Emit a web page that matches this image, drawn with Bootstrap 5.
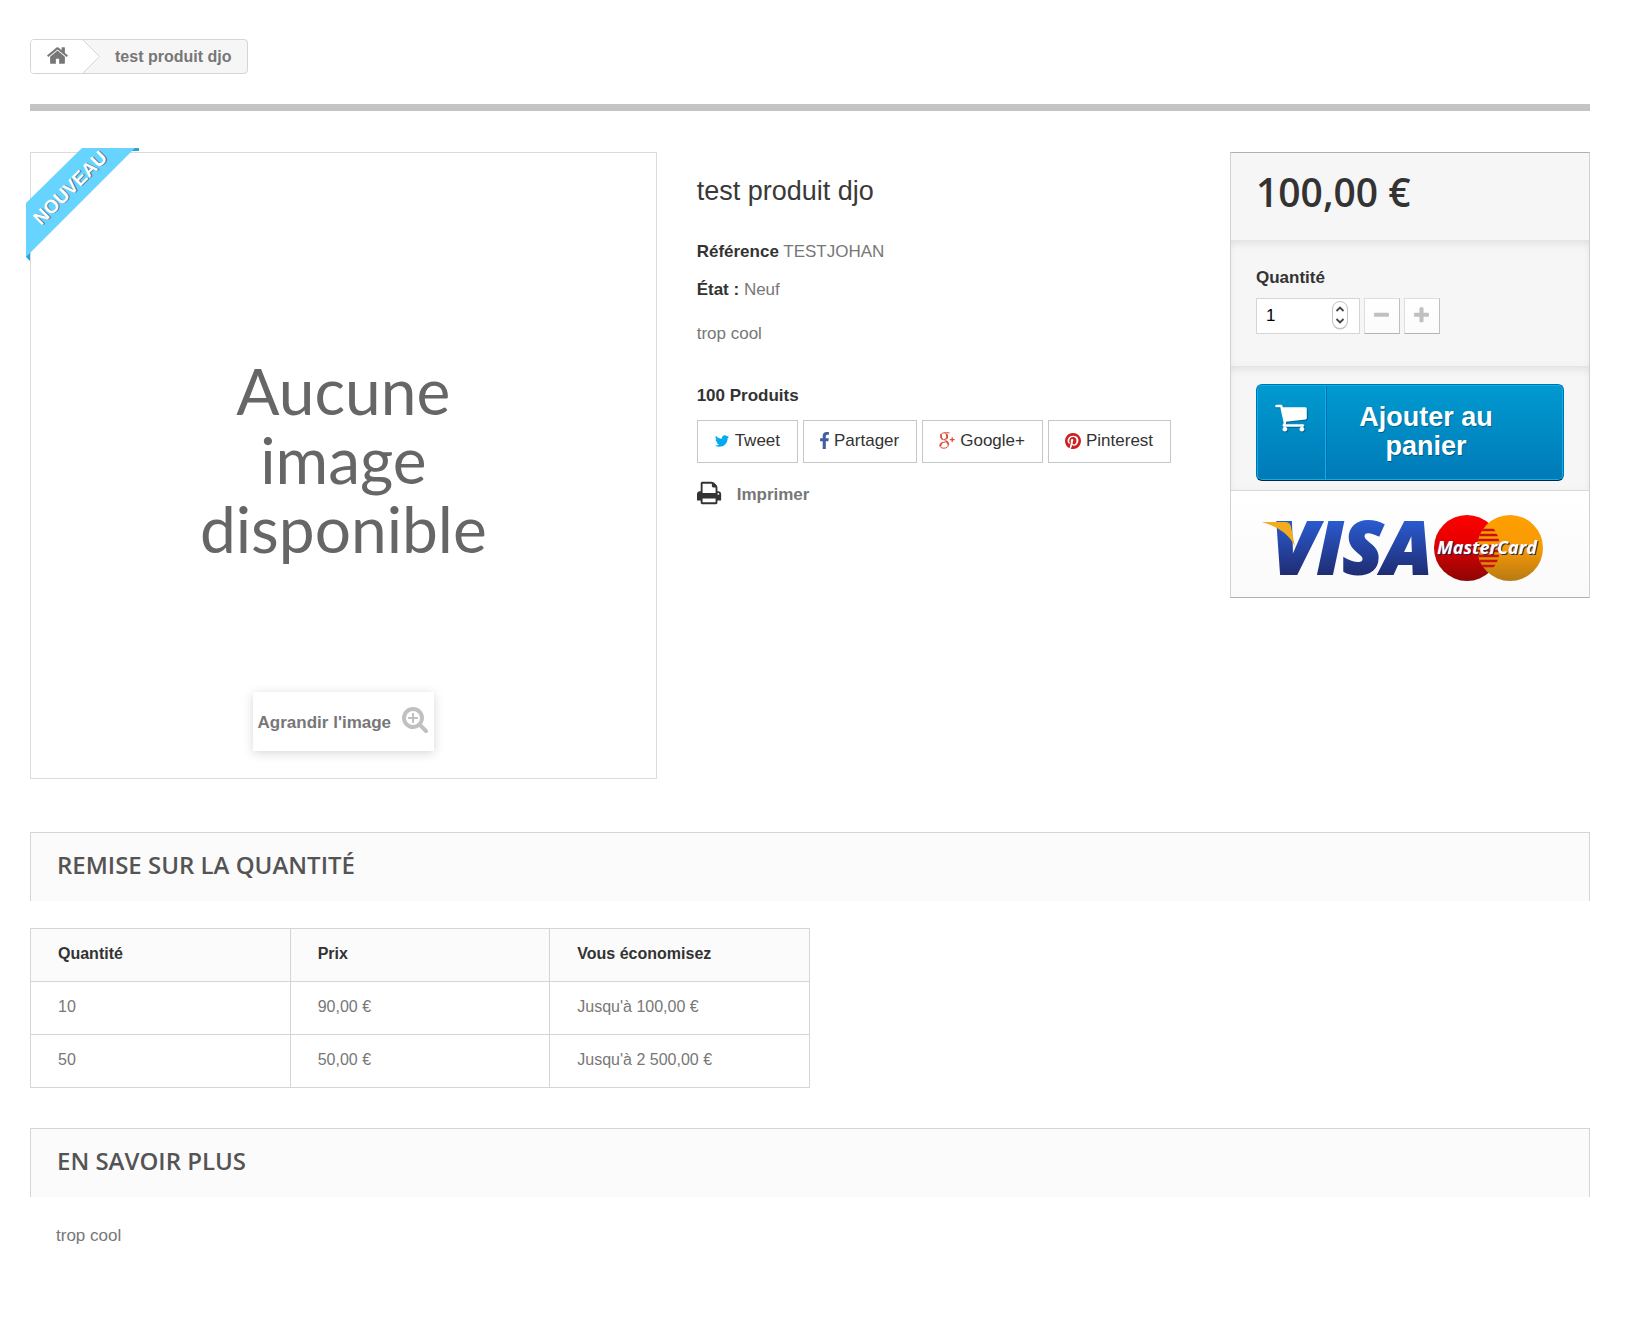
<!DOCTYPE html>
<html lang="fr">
<head>
<meta charset="utf-8">
<meta name="viewport" content="width=device-width, initial-scale=1">
<title>test produit djo</title>
<link href="https://cdn.jsdelivr.net/npm/bootstrap@5.3.0/dist/css/bootstrap.min.css" rel="stylesheet">
<style>
  body { font-family: "Liberation Sans", Arial, sans-serif; font-size: 17px; line-height: 24px; color: #777; background: #fff; }
  .page-wrap { padding: 39px 60px 60px 30px; }
  a { color: #777; text-decoration: none; }
  a:hover { color: #333; }
  .ink { color: #333; }
  .icon { display: block; fill: currentColor; flex: none; }

  /* breadcrumb */
  .crumbs { height: 35px; border: 1px solid #d6d4d4; border-radius: 4px; background: #f6f6f6; font-size: 16px; overflow: hidden; }
  .crumb-home { background: #fff; width: 49px; padding: 0 0 2px 15px; }
  .crumb-tip { width: 20px; height: 33px; display: block; flex: none; }
  .crumb-here { padding: 0 16px 0 15px; }

  .rule { height: 7px; margin: 30px 0 41px; border: 0; background: #c4c4c4; opacity: 1; }
  .product { --bs-gutter-x: 40px; }

  /* picture */
  .shot { border: 1px solid #dbdbdb; aspect-ratio: 1; padding-bottom: 12px; }
  .shot-text { font: 400 64px/69px Lato, "Open Sans", sans-serif; color: #666; }
  .ribbon { left: -5px; top: -5px; }
  .ribbon text { font: bold 19px "Liberation Sans", Arial, sans-serif; }
  .enlarge { bottom: 27px; height: 59px; padding: 4px 5px 0 5px; gap: 10px; border: 0; background: #fff; color: #777; box-shadow: 0 2px 10px rgba(0,0,0,.16); }
  .enlarge .icon { color: #c0c0c0; margin-bottom: 8px; }

  /* details */
  .details { padding-top: 24px; }
  .details h1 { font-size: 27px; line-height: 30px; margin-bottom: 34px; color: #3a3939; font-weight: 400; }
  .details p { margin: 0; }
  .details .state { margin-top: 14px; }
  .details .summary { margin-top: 20px; }
  .details .stock { margin: 38px 0 12px; }
  .share-row { gap: 5px; }
  .share-btn { height: 43px; padding: 0 17px 2px 16px; border: 1px solid #c7c7c7; border-radius: 0; background: #fff; color: #333; font-size: 17px; gap: 5px; white-space: nowrap; }
  .share-btn:hover { background: #f6f6f6; }
  .print-link { gap: 14px; margin-top: 17px; }
  .print-link .icon { margin-bottom: 4px; }

  /* buy box */
  .buy { border: 1px solid #d2d0d0; border-top-color: #b0b0b0; border-bottom-color: #b0b0b0; background: #f6f6f6; }
  .buy-part { padding: 0 25px; }
  .shaded { box-shadow: inset 0 7px 9px -3px rgba(0,0,0,.07), inset 0 0 9px rgba(0,0,0,.03); }
  .price { font: 600 39px/39px "Open Sans", sans-serif; padding: 19px 25px 29px; color: #333; }
  .qty { padding-top: 26px; padding-bottom: 32px; }
  .qty-row { gap: 4px; margin-top: 8px; }
  .qty-field { width: 104px; height: 36px; padding: 0 30px 0 9px; border: 1px solid #d6d4d4; border-radius: 0; font-size: 17px; color: #000; appearance: textfield; -moz-appearance: textfield; }
  .qty-field::-webkit-inner-spin-button { appearance: none; -webkit-appearance: none; }
  .stepper { right: 11px; top: 2px; }
  .qty-btn { width: 36px; height: 36px; padding: 0 0 2px; border: 1px solid; border-color: #dedcdc #c1bfbf #b5b4b4 #dedcdc; background: linear-gradient(#fff, #fbfbfb); color: #c0c0c0; }
  .add { padding-top: 18px; padding-bottom: 9px; }
  .add-btn { height: 97px; padding: 0; border: 1px solid #0079b6; border-color: #006fb7 #006fb7 #012740; border-radius: 6px; color: #fff; font-weight: bold; font-size: 27px; line-height: 29px;
    background: linear-gradient(#009ad0, #007ab7); box-shadow: inset 0 0 0 1px #06b2e6; text-shadow: 1px 1px rgba(0,0,0,.3); overflow: hidden; }
  .add-cart { width: 69px; padding-top: 15px; padding-left: 17px; border-right: 1px solid #06b2e6; }
  .add-cart .icon { filter: drop-shadow(1px 1px rgba(0,0,0,.3)); }
  .add-text { border-left: 1px solid #006fb7; padding: 0 44px 2px 6px; margin: 1px 0; }
  .cards { border-top: 1px solid #dad8d8; background: linear-gradient(#fff, #fafafa); padding: 9px 0 17px 25px; }
  .visa { font: italic 800 73px "Open Sans", sans-serif; stroke-width: 2px; }
  .master { font: italic 700 18px "Open Sans", sans-serif; }

  /* lower sections */
  .lower { margin-top: 53px; }
  .block-title { border: 1px solid #d6d4d4; border-bottom: 0; background: #fbfbfb; color: #555454; font: 600 24px/33px "Open Sans", sans-serif; padding: 15px 26px 20px; margin: 0; text-transform: uppercase; }
  .discounts { font-size: 16px; border-color: #d6d4d4; margin: 27px 0 40px; table-layout: fixed; line-height: 22px; }
  .discounts > :not(caption) > * > * { padding: 14px 27px 16px; color: #777; background: none; }
  .discounts > thead > tr > th { background: #fbfbfb; color: #333; }
  .more-text { margin: 0; padding: 27px 26px 0; }
</style>
<script src="https://cdn.jsdelivr.net/npm/bootstrap@5.3.0/dist/js/bootstrap.bundle.min.js"></script>
</head>
<body>
<div class="container-fluid page-wrap">

  <nav aria-label="Fil d'Ariane" class="d-flex">
    <div class="crumbs d-inline-flex align-items-stretch">
      <a href="#" class="crumb-home d-flex align-items-center" aria-label="Accueil">
        <svg class="icon" width="23" height="23" viewBox="0 0 1792 1792"><path d="M1472 992v480q0 26-19 45t-45 19h-384v-384h-256v384h-384q-26 0-45-19t-19-45v-480q0-1 .5-3t.5-3l575-474 575 474q1 2 1 6zm223-69l-62 74q-8 9-21 11h-3q-13 0-21-7l-692-577-692 577q-12 8-24 7-13-2-21-11l-62-74q-8-10-7-23.5t11-21.5l719-599q32-26 76-26t76 26l244 204v-195q0-14 9-23t23-9h192q14 0 23 9t9 23v408l219 182q10 8 11 21.5t-7 23.5z"/></svg>
      </a>
      <svg class="crumb-tip" viewBox="0 0 20 33"><path d="M0 0H3L19.500 16.500 3 33H0z" fill="#fff"/><path d="M3 0L19.500 16.500 3 33" fill="none" stroke="#d6d4d4"/></svg>
      <span class="crumb-here fw-bold d-flex align-items-center">test produit djo</span>
    </div>
  </nav>

  <hr class="rule">

  <div class="row product">
    <div class="col-5">
      <div class="shot position-relative d-flex align-items-center justify-content-center">
        <div class="shot-text text-center">Aucune<br>image<br>disponible</div>
        <svg class="ribbon position-absolute" width="113" height="113" viewBox="0 0 113 113">
          <path d="M104 0h9v3h-9zM0 104v5l4 4v-9z" fill="#2aa3d8"/>
          <path d="M56 0h53L0 109V55z" fill="#67d3ff"/>
          <g transform="translate(15 78) rotate(-45)"><text x="1" y="1" fill="#4a7a90">NOUVEAU</text><text x="0" y="0" fill="#fff">NOUVEAU</text></g>
        </svg>
        <button type="button" class="enlarge position-absolute d-flex align-items-center fw-bold text-nowrap">Agrandir l'image
          <svg class="icon" width="28" height="28" viewBox="0 0 1792 1792"><path d="M1088 800v64q0 13-9.500 22.500t-22.500 9.500h-224v224q0 13-9.500 22.500t-22.500 9.500h-64q-13 0-22.500-9.500t-9.500-22.500v-224h-224q-13 0-22.500-9.500t-9.500-22.500v-64q0-13 9.500-22.500t22.500-9.500h224v-224q0-13 9.500-22.500t22.500-9.500h64q13 0 22.500 9.500t9.500 22.500v224h224q13 0 22.500 9.500t9.500 22.500zm128 32q0-185-131.500-316.500t-316.500-131.500-316.500 131.500-131.500 316.500 131.500 316.500 316.500 131.500 316.500-131.500 131.500-316.500zm512 832q0 53-37.500 90.500t-90.500 37.500q-54 0-90-38l-343-342q-179 124-399 124-143 0-273.500-55.500t-225-150-150-225-55.500-273.500 55.500-273.500 150-225 225-150 273.500-55.500 273.500 55.500 225 150 150 225 55.500 273.500q0 220-124 399l343 343q37 37 37 90z"/></svg>
        </button>
      </div>
    </div>

    <div class="col-4">
      <div class="details">
        <h1>test produit djo</h1>
        <p><strong class="ink">Référence</strong> TESTJOHAN</p>
        <p class="state"><strong class="ink">État :</strong> Neuf</p>
        <p class="summary">trop cool</p>
        <p class="stock ink fw-bold">100 Produits</p>
        <div class="share-row d-flex">
          <button type="button" class="share-btn d-flex align-items-center">
            <svg class="icon" width="16" height="16" viewBox="0 0 1792 1792" color="#00aaf0"><path d="M1684 408q-67 98-162 167 1 14 1 42 0 130-38 259.500t-115.500 248.500-184.500 210.500-258 146-323 54.500q-271 0-496-145 35 4 78 4 225 0 401-138-105-2-188-64.500t-114-159.500q33 5 61 5 43 0 85-11-112-23-185.500-111.500t-73.500-205.500v-4q68 38 146 41-66-44-105-115t-39-154q0-88 44-163 121 149 294.500 238.500t371.500 99.500q-8-38-8-74 0-134 94.500-228.500t228.500-94.500q140 0 236 102 109-21 205-78-37 115-142 178 93-10 186-50z"/></svg>Tweet</button>
          <button type="button" class="share-btn d-flex align-items-center">
            <svg class="icon" width="9" height="17" viewBox="479 0 864 1664" color="#435f9f"><path d="M1343 12v264h-157q-86 0-116 36t-30 108v189h293l-39 296h-254v759h-306v-759h-255v-296h255v-218q0-186 104-288.500t277-102.500q147 0 228 12z"/></svg>Partager</button>
          <button type="button" class="share-btn d-flex align-items-center">
            <svg width="16" height="17" viewBox="0 0 16 17" fill="none" stroke="#e04b34"><path d="M10.500 .8H5.500M6 7.700C5 9.200 9.300 9.600 9.300 12.800 9.300 15 7.500 16.200 4.800 16.200S.9 15 .9 13.200 2.800 10.300 6.500 10.200" stroke-width="1"/><path d="M7 8.800C8 10 9.400 10.600 9.400 12.800M2.300 2.200C1.600 3.500 2 6.500 3.500 7.300M7.400 1.800C8.300 3.500 8.200 6 7.200 7M1.400 14.200C1.300 12.500 2 11.500 3.200 10.900" stroke-width="1.700"/><path d="M5.500 .8C3 .8 1.800 2.300 1.800 4.300S3 7.700 4.800 7.700 8 6.300 8 4.300 7 .9 5.500 .9" stroke-width="1"/><path d="M10.800 7.600H15.600M13.200 5.200V10" stroke-width="1.300"/></svg>Google+</button>
          <button type="button" class="share-btn d-flex align-items-center">
            <svg class="icon" width="16" height="16" viewBox="128 128 1536 1536" color="#ce1f21"><path d="M1664 896q0 209-103 385.500t-279.500 279.500-385.500 103q-111 0-218-32 59-93 78-164 9-34 54-211 20 39 73 67.500t114 28.500q121 0 216-68.500t147-188.500 52-270q0-114-59.500-214t-172.500-163-255-63q-105 0-196 29t-154.500 77-109 110.500-67 129.500-21.500 134q0 104 40 183t117 111q30 12 38-20 2-7 8-31t8-30q6-23-11-43-51-61-51-151 0-151 104.500-259.500t273.500-108.500q151 0 235.500 82t84.500 213q0 170-68.500 289t-175.500 119q-61 0-98-43.500t-23-104.500q8-35 26.500-93.500t30-103 11.500-75.500q0-50-27-83t-77-33q-62 0-105 57t-43 142q0 73 25 122l-99 418q-17 70-13 177-206-91-333-281t-127-423q0-209 103-385.500t279.500-279.500 385.500-103 385.500 103 279.500 279.500 103 385.500z"/></svg>Pinterest</button>
        </div>
        <a href="#" class="print-link d-inline-flex align-items-center fw-bold">
          <svg class="icon ink" width="26" height="26" viewBox="64 0 1792 1792"><path d="M448 1536h896v-256h-896v256zm0-640h896v-384h-160q-40 0-68-28t-28-68v-160h-640v640zm1152 64q0-26-19-45t-45-19-45 19-19 45 19 45 45 19 45-19 19-45zm128 0v416q0 13-9.500 22.500t-22.500 9.500h-224v160q0 40-28 68t-68 28h-960q-40 0-68-28t-28-68v-160h-224q-13 0-22.500-9.500t-9.500-22.500v-416q0-79 56.500-135.500t135.500-56.500h64v-544q0-40 28-68t68-28h672q40 0 88 20t76 48l152 152q28 28 48 76t20 88v256h64q79 0 135.500 56.500t56.500 135.500z"/></svg>Imprimer</a>
      </div>
    </div>

    <div class="col-3">
      <form class="buy">
        <div class="price">100,00 €</div>
        <div class="buy-part shaded qty">
          <label for="qty" class="d-block fw-bold ink">Quantité</label>
          <div class="qty-row d-flex">
            <div class="position-relative">
              <input id="qty" class="qty-field d-block" type="number" value="1" min="1">
              <svg class="stepper position-absolute" width="18" height="31" viewBox="0 0 18 31"><rect x="1.500" y="2" width="15" height="27.500" rx="7.500" fill="#bbb"/><rect x="1.500" y="1.500" width="15" height="27" rx="7.500" fill="#fff" stroke="#c4c4c4"/><path d="M5.500 11l3.500-3.500 3.500 3.500M5.500 19l3.500 3.500 3.500-3.500" fill="none" stroke="#444" stroke-width="1.800"/></svg>
            </div>
            <button type="button" class="qty-btn d-flex align-items-center justify-content-center" aria-label="Moins"><svg class="icon" width="19" height="19" viewBox="0 0 1792 1792"><path d="M1600 736v192q0 40-28 68t-68 28h-1216q-40 0-68-28t-28-68v-192q0-40 28-68t68-28h1216q40 0 68 28t28 68z"/></svg></button>
            <button type="button" class="qty-btn d-flex align-items-center justify-content-center" aria-label="Plus"><svg class="icon" width="19" height="19" viewBox="0 0 1792 1792"><path d="M1600 736v192q0 40-28 68t-68 28h-416v416q0 40-28 68t-68 28h-192q-40 0-68-28t-28-68v-416h-416q-40 0-68-28t-28-68v-192q0-40 28-68t68-28h416v-416q0-40 28-68t68-28h192q40 0 68 28t28 68v416h416q40 0 68 28t28 68z"/></svg></button>
          </div>
        </div>
        <div class="buy-part shaded add">
          <button type="submit" class="add-btn d-flex w-100">
            <span class="add-cart flex-shrink-0 align-self-stretch"><svg class="icon" width="34" height="34" viewBox="0 0 1792 1792"><path d="M704 1536q0 52-38 90t-90 38-90-38-38-90 38-90 90-38 90 38 38 90zm896 0q0 52-38 90t-90 38-90-38-38-90 38-90 90-38 90 38 38 90zm128-1088v512q0 24-16.500 42.500t-40.500 21.500l-1044 122q13 60 13 70 0 16-24 64h920q26 0 45 19t19 45-19 45-45 19h-1024q-26 0-45-19t-19-45q0-11 8-31.500t16-36 21.500-40 15.500-29.500l-177-823h-204q-26 0-45-19t-19-45 19-45 45-19h256q16 0 28.500 6.500t19.500 15.500 13 24.500 8 26 5.500 29.500 4.500 26h1201q26 0 45 19t19 45z"/></svg></span>
            <span class="add-text flex-fill align-self-stretch d-flex align-items-center justify-content-center">Ajouter au<br>panier</span>
          </button>
        </div>
        <div class="cards">
          <svg class="d-block overflow-visible" width="300" height="80" viewBox="0 -10 300 80" role="img" aria-label="Visa, MasterCard">
            <defs>
              <linearGradient id="gv" x1="0" y1="0" x2="0" y2="1"><stop offset=".25" stop-color="#2a5bd0"/><stop offset=".8" stop-color="#1f2c72"/></linearGradient>
              <linearGradient id="gr" x1="0" y1="0" x2="0" y2="1"><stop offset="0" stop-color="#ff0000"/><stop offset=".4" stop-color="#e60000"/><stop offset="1" stop-color="#8c0505"/></linearGradient>
              <linearGradient id="go" x1="0" y1="0" x2="0" y2="1"><stop offset="0" stop-color="#ff9f00"/><stop offset=".5" stop-color="#f79a05"/><stop offset="1" stop-color="#b87a14"/></linearGradient>
              <clipPath id="left-disc"><circle cx="211" cy="38" r="33"/></clipPath>
              <clipPath id="right-disc"><circle cx="254" cy="38" r="33"/></clipPath>
            </defs>
            <text class="visa" x="16" y="64" fill="url(#gv)" stroke="url(#gv)">VISA</text>
            <path d="M6 12H29Q34 12 35 17L39 37Q32 20 6 12z" fill="#f2ac1c"/>
            <circle cx="211" cy="38" r="33" fill="url(#gr)"/>
            <circle cx="254" cy="38" r="33" fill="url(#go)"/>
            <g clip-path="url(#left-disc)"><g clip-path="url(#right-disc)"><path d="M215 20H250M215 25H250M215 30H250M215 36H250M215 41H250M215 46H250M215 51H250M215 56H250" stroke="#c81208" stroke-width="2.500"/></g></g>
            <text class="master" x="182" y="45" fill="#1c2a5c">MasterCard</text>
            <text class="master" x="181" y="44" fill="#fff">MasterCard</text>
          </svg>
        </div>
      </form>
    </div>
  </div>

  <section class="lower">
    <h3 class="block-title">Remise sur la quantité</h3>
    <table class="table table-bordered discounts w-50">
      <thead><tr><th scope="col">Quantité</th><th scope="col">Prix</th><th scope="col">Vous économisez</th></tr></thead>
      <tbody>
        <tr><td>10</td><td>90,00 €</td><td>Jusqu'à 100,00 €</td></tr>
        <tr><td>50</td><td>50,00 €</td><td>Jusqu'à 2 500,00 €</td></tr>
      </tbody>
    </table>
  </section>

  <section>
    <h3 class="block-title">En savoir plus</h3>
    <p class="more-text">trop cool</p>
  </section>
</div>
</body>
</html>
